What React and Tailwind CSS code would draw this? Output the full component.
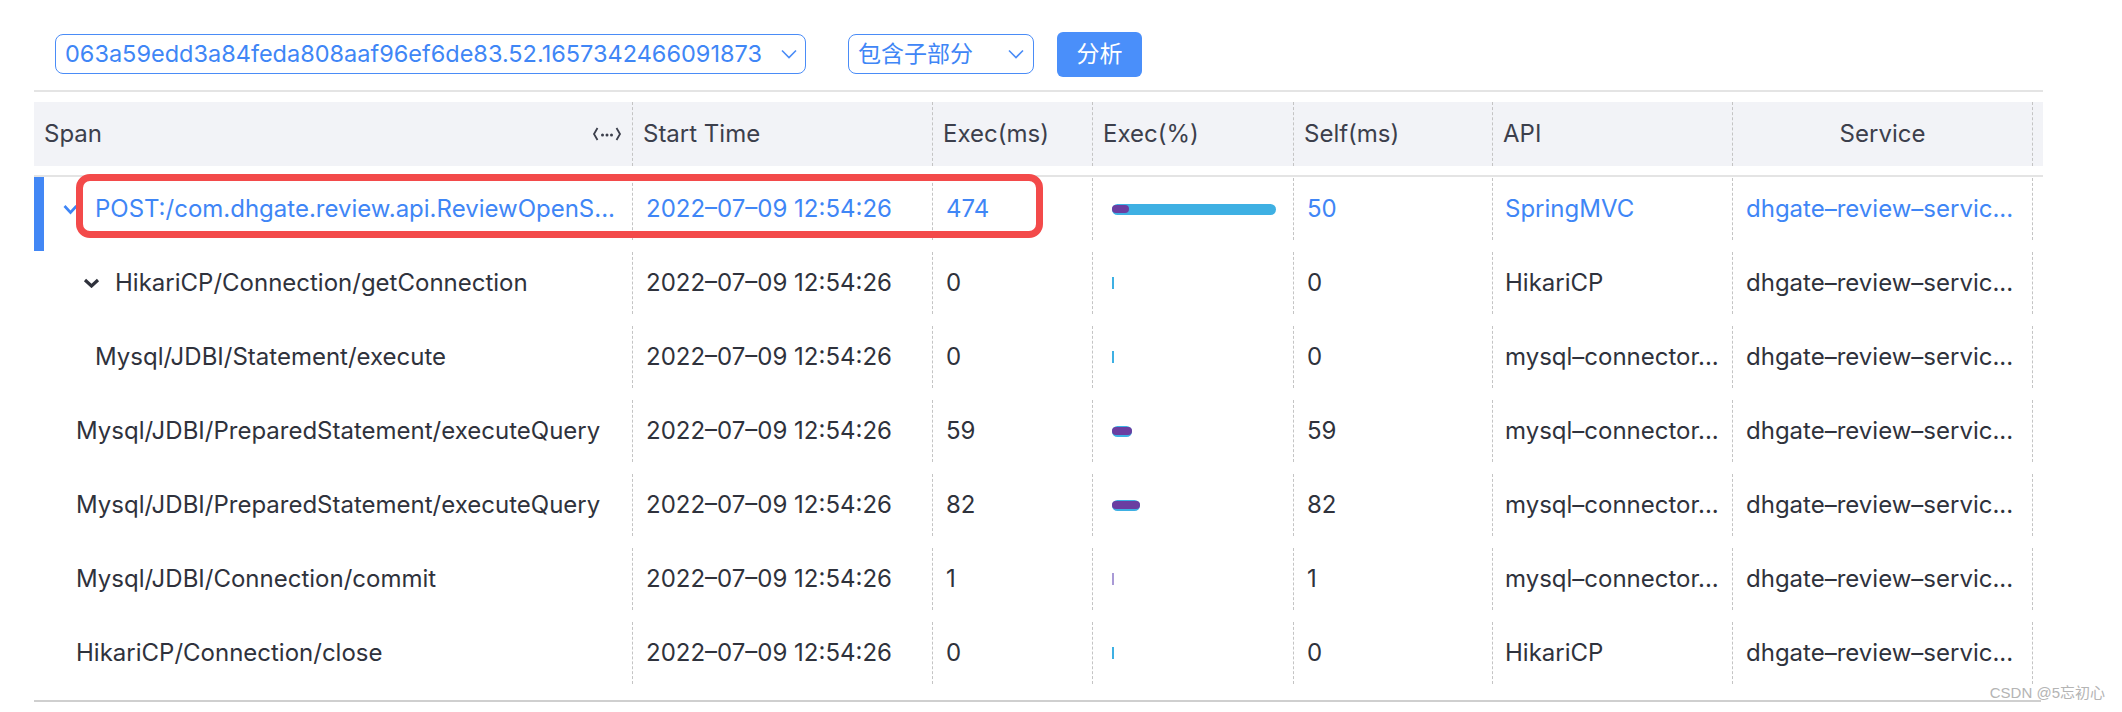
const rows = [
  {
    span: "POST:/com.dhgate.review.api.ReviewOpenS...",
    pad: "pl-[19px]",
    chevron: "blue",
    active: true,
    exec: 474,
    self: 50,
    api: "SpringMVC",
  },
  {
    span: "HikariCP/Connection/getConnection",
    pad: "pl-[39px]",
    chevron: "dark",
    exec: 0,
    self: 0,
    api: "HikariCP",
  },
  {
    span: "Mysql/JDBI/Statement/execute",
    pad: "pl-[51px]",
    exec: 0,
    self: 0,
    api: "mysql–connector...",
  },
  {
    span: "Mysql/JDBI/PreparedStatement/executeQuery",
    pad: "pl-[32px]",
    exec: 59,
    self: 59,
    api: "mysql–connector...",
  },
  {
    span: "Mysql/JDBI/PreparedStatement/executeQuery",
    pad: "pl-[32px]",
    exec: 82,
    self: 82,
    api: "mysql–connector...",
  },
  {
    span: "Mysql/JDBI/Connection/commit",
    pad: "pl-[32px]",
    exec: 1,
    self: 1,
    api: "mysql–connector...",
  },
  {
    span: "HikariCP/Connection/close",
    pad: "pl-[32px]",
    exec: 0,
    self: 0,
    api: "HikariCP",
  },
];

const TOTAL = 474;
const BAR = 164;

const SelectArrow = () => (
  <svg width="16" height="10" viewBox="0 0 16 10" fill="none">
    <polyline points="1,1.5 8,8.5 15,1.5" stroke="#4a8cf7" strokeWidth="1.6" />
  </svg>
);

const Chevron = ({ tone }) =>
  tone === "blue" ? (
    <svg width="15" height="11" viewBox="0 0 15 11" fill="none">
      <polyline points="1.5,2 7.5,8.5 13.5,2" stroke="#3f86f6" strokeWidth="2.6" />
    </svg>
  ) : (
    <svg width="17" height="10" viewBox="0 0 17 10" fill="none">
      <polyline points="2,2 8.5,8 15,2" stroke="#2f323c" strokeWidth="3.2" />
    </svg>
  );

const ResizeIcon = () => (
  <svg width="30" height="20" viewBox="0 0 30 20" fill="none">
    <polyline points="5.5,4 2,10 5.5,16" stroke="#3c3f4c" strokeWidth="1.8" />
    <circle cx="10.5" cy="11" r="1.5" fill="#3c3f4c" />
    <circle cx="15" cy="11" r="1.5" fill="#3c3f4c" />
    <circle cx="19.5" cy="11" r="1.5" fill="#3c3f4c" />
    <polyline points="24.5,4 28,10 24.5,16" stroke="#3c3f4c" strokeWidth="1.8" />
  </svg>
);

const ExecBar = ({ exec, self }) => {
  if (exec <= 1) {
    return (
      <div
        className={
          exec === 1 ? "w-[2px] h-[12px] bg-[#a99ad6]" : "w-[2px] h-[12px] bg-[#3eb0e3]"
        }
      />
    );
  }
  const w = Math.round((exec / TOTAL) * BAR);
  const sw = Math.round((self / TOTAL) * BAR);
  return (
    <div
      className="h-[11px] rounded-full bg-[#3eb0e3] flex items-center"
      style={{ width: `${w}px` }}
    >
      <div
        className="h-[8px] rounded-full bg-[#6a3ea1]"
        style={{ width: `${sw}px` }}
      />
    </div>
  );
};

const Cell = ({ width, children, className = "" }) => (
  <div
    className={`${width} h-[62px] mt-[1px] border-r border-dashed border-[#c4c4c4] flex items-center ${className}`}
  >
    {children}
  </div>
);

export default function App() {
  return (
    <div className="relative w-[2122px] h-[712px] bg-white overflow-hidden font-['Inter','Noto_Sans_CJK_SC',sans-serif]">
      <div className="pl-[34px]">
        {/* query bar */}
        <div className="flex items-center pl-[21px] pt-[30px] h-[78px]">
          <div className="w-[751px] h-[40px] rounded-[8px] border-[1.5px] border-[#4a8cf7] flex items-center justify-between pl-[9px] pr-[8px] text-[23.5px] text-[#3f86f6]">
            <span>063a59edd3a84feda808aaf96ef6de83.52.1657342466091873</span>
            <SelectArrow />
          </div>
          <div className="ml-[42px] w-[186px] h-[40px] rounded-[8px] border-[1.5px] border-[#4a8cf7] flex items-center justify-between pl-[9px] pr-[9px] text-[23px] text-[#3f86f6]">
            <span>包含子部分</span>
            <SelectArrow />
          </div>
          <button className="ml-[23px] w-[85px] h-[45px] rounded-[6px] bg-[#4a8ffa] text-white text-[23px] flex items-center justify-center">
            分析
          </button>
        </div>

        <div className="mt-[12px] w-[2009px] h-[2px] bg-[#e4e4e4]" />

        {/* header */}
        <div className="mt-[10px] w-[2009px] h-[64px] bg-[#f2f3f7] flex text-[24px] text-[#3c3f4c]">
          <div className="w-[599px] h-full border-r border-dashed border-[#c4c4c4] flex items-center justify-between pl-[10px] pr-[10px]">
            <span>Span</span>
            <ResizeIcon />
          </div>
          <div className="w-[300px] h-full border-r border-dashed border-[#c4c4c4] flex items-center pl-[10px]">Start Time</div>
          <div className="w-[160px] h-full border-r border-dashed border-[#c4c4c4] flex items-center pl-[10px]">Exec(ms)</div>
          <div className="w-[201px] h-full border-r border-dashed border-[#c4c4c4] flex items-center pl-[10px]">Exec(%)</div>
          <div className="w-[199px] h-full border-r border-dashed border-[#c4c4c4] flex items-center pl-[10px]">Self(ms)</div>
          <div className="w-[240px] h-full border-r border-dashed border-[#c4c4c4] flex items-center pl-[10px]">API</div>
          <div className="w-[300px] h-full border-r border-dashed border-[#c4c4c4] flex items-center justify-center">Service</div>
        </div>

        <div className="mt-[9px] w-[2009px] h-[2px] bg-[#e4e4e4]" />

        {/* rows */}
        <div className="w-[2009px]">
          {rows.map((r, i) => {
            const tone = r.active ? "text-[#3f86f6]" : "text-[#2f323c]";
            return (
              <div key={i} className={`flex h-[74px] text-[24px] ${tone}`}>
                <div className="w-[599px] h-full flex">
                  <div className={r.active ? "w-[10px] h-full bg-[#4287f5]" : "w-[10px] h-full"} />
                  <Cell width="flex-1" className={r.pad}>
                    {r.chevron && (
                      <div className="w-[32px] flex items-center">
                        <Chevron tone={r.chevron} />
                      </div>
                    )}
                    <span className="whitespace-nowrap">{r.span}</span>
                  </Cell>
                </div>
                <Cell width="w-[300px]" className="pl-[13px]">2022–07–09 12:54:26</Cell>
                <Cell width="w-[160px]" className="pl-[13px]">{r.exec}</Cell>
                <Cell width="w-[201px]" className="pl-[19px]">
                  <ExecBar exec={r.exec} self={r.self} />
                </Cell>
                <Cell width="w-[199px]" className="pl-[13px]">{r.self}</Cell>
                <Cell width="w-[240px]" className="pl-[12px] whitespace-nowrap">{r.api}</Cell>
                <Cell width="w-[300px]" className="pl-[13px] whitespace-nowrap">dhgate–review–servic...</Cell>
              </div>
            );
          })}
        </div>

        <div className="mt-[5px] w-[2007px] h-[2px] bg-[#cfcfcf]" />
      </div>

      {/* annotation overlay */}
      <div className="absolute left-[76px] top-[174px] w-[967px] h-[64px] border-[7px] border-[#f34a4a] rounded-[14px]" />

      <div className="absolute right-[17px] bottom-[8px] text-[15px] text-[#b4b4b4] font-['Liberation_Sans','Noto_Sans_CJK_SC',sans-serif]">
        CSDN @5忘初心
      </div>
    </div>
  );
}
